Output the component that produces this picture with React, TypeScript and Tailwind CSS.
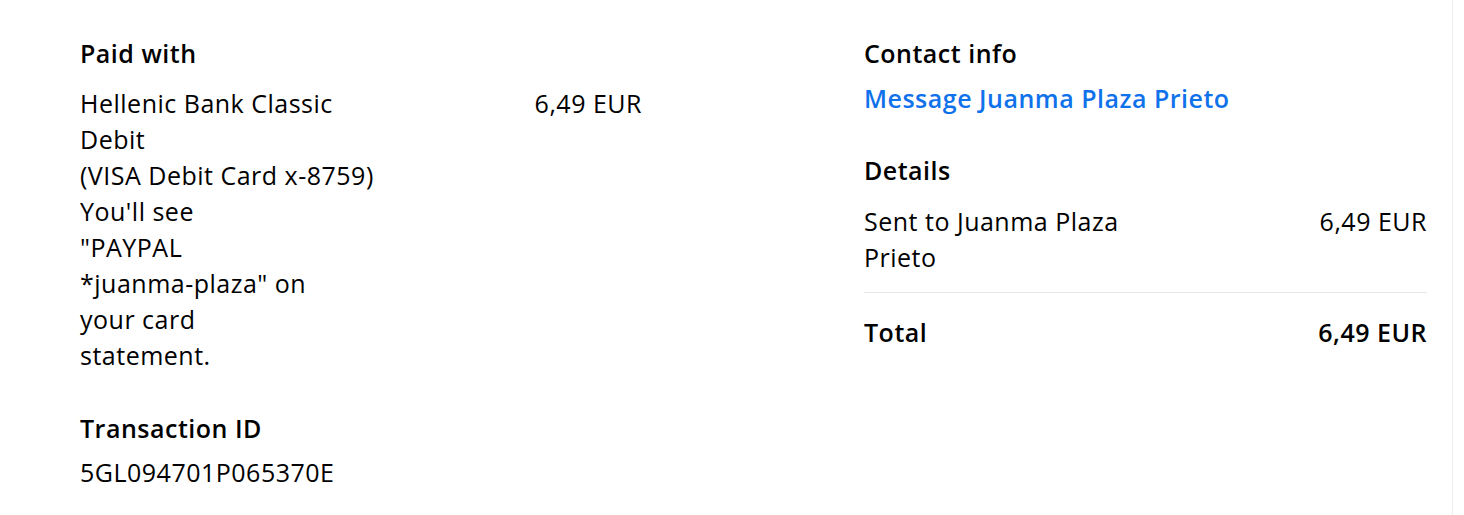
const Row = ({
  label,
  amount,
  bold,
}: {
  label: string;
  amount: string;
  bold?: boolean;
}) => (
  <div className={`flex justify-between ${bold ? "font-semibold" : ""}`}>
    <span className="w-1/2">{label}</span>
    <span>{amount}</span>
  </div>
);

const cardLines = [
  "Hellenic Bank Classic",
  "Debit",
  "(VISA Debit Card x-8759)",
  "You'll see",
  '"PAYPAL',
  '*juanma-plaza" on',
  "your card",
  "statement.",
];

const App = () => {
  return (
    <div
      className="min-h-screen bg-white text-[#000000] text-[25px] leading-[36px] tracking-[0.5px]"
      style={{ fontFamily: "'Open Sans', Lato, sans-serif" }}
    >
      <div className="w-[1453px] min-h-[515px] border-r border-[#eeeeee] flex pl-[80px] pr-[25px] pt-[35px]">
        {/* left column */}
        <div className="w-[562px]">
          <h3 className="font-semibold">Paid with</h3>
          <div className="flex justify-between mt-[14px]">
            <p className="whitespace-nowrap">
              {cardLines.map((line) => (
                <span key={line} className="block">
                  {line}
                </span>
              ))}
            </p>
            <span>6,49 EUR</span>
          </div>

          <h3 className="font-semibold mt-[37px]">Transaction ID</h3>
          <p className="mt-[8px]">5GL094701P065370E</p>
        </div>

        {/* right column */}
        <div className="ml-[222px] flex-1">
          <h3 className="font-semibold">Contact info</h3>
          <a href="#" className="block font-semibold text-[#1072eb] mt-[9px]">
            Message Juanma Plaza Prieto
          </a>

          <h3 className="font-semibold mt-[36px]">Details</h3>
          <div className="mt-[15px] pb-[17px] border-b border-[#e6e6e6]">
            <Row label="Sent to Juanma Plaza Prieto" amount="6,49 EUR" />
          </div>
          <div className="mt-[21px]">
            <Row label="Total" amount="6,49 EUR" bold />
          </div>
        </div>
      </div>
    </div>
  );
};

export default App;
